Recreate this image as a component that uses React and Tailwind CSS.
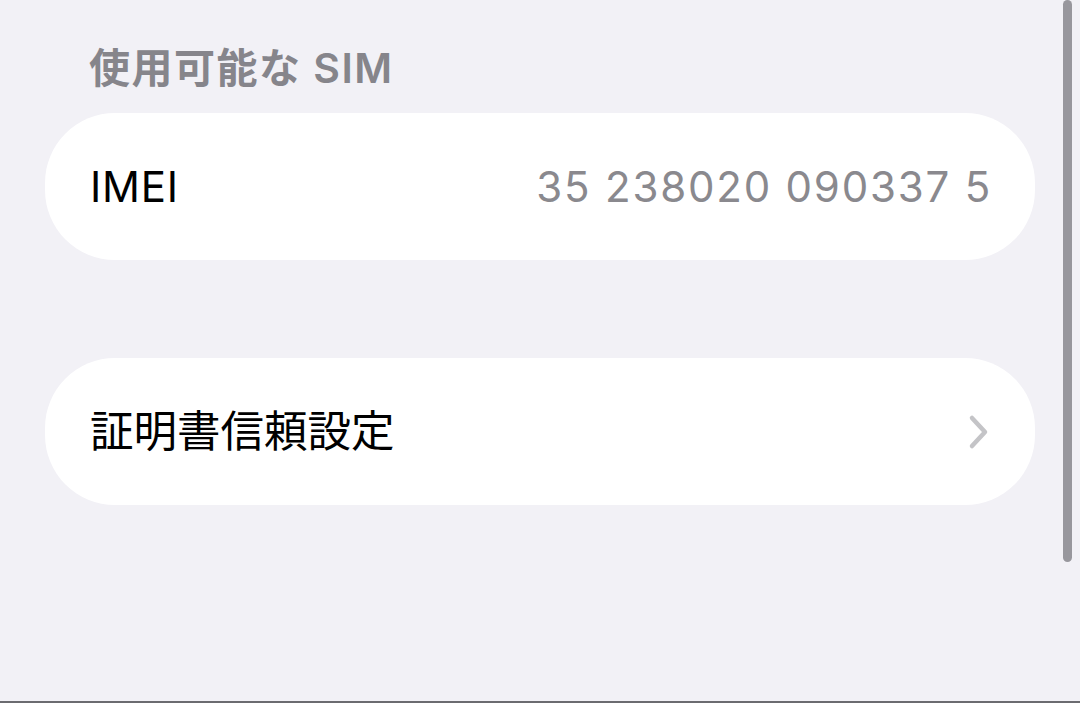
import React from "react";

const font = {
  fontFamily: 'Inter, "Noto Sans CJK JP", sans-serif',
};

export default function App() {
  return (
    <div
      className="relative h-[703px] w-[1080px] overflow-hidden bg-[#f2f1f6]"
      style={font}
    >
      {/* Section header */}
      <div className="pl-[89px] pt-[42px] text-[41px] font-semibold leading-[52px] tracking-[1.5px] text-[#86858b]">
        使用可能な SIM
      </div>

      <div className="mt-[19px] flex flex-col gap-[98px] pl-[45px] pr-[45px]">
        {/* IMEI row */}
        <div className="flex h-[147px] items-center justify-between rounded-[70px] bg-white pl-[45px] pr-[43px]">
          <span className="text-[42px] tracking-[0.8px] text-black">IMEI</span>
          <span className="text-[42px] tracking-[1.8px] text-[#8a898e]">35 238020 090337 5</span>
        </div>

        {/* Certificate trust settings */}
        <div className="flex h-[147px] items-center justify-between rounded-[70px] bg-white pl-[45px] pr-[45px]">
          <span className="text-[43.5px] text-black">証明書信頼設定</span>
          <svg
            width="22"
            height="36"
            viewBox="0 0 22 36"
            fill="none"
            stroke="#c4c4c7"
            strokeWidth="4.5"
            strokeLinecap="round"
            strokeLinejoin="round"
          >
            <path d="M4 4 L17 18 L4 32" />
          </svg>
        </div>
      </div>

      {/* Scrollbar */}
      <div className="absolute left-[1063px] top-0 h-[562px] w-[9px] rounded-full bg-[#98979d]" />

      {/* Bottom edge line */}
      <div className="absolute bottom-0 left-0 h-[2px] w-full bg-[#6b6b70]" />
    </div>
  );
}
